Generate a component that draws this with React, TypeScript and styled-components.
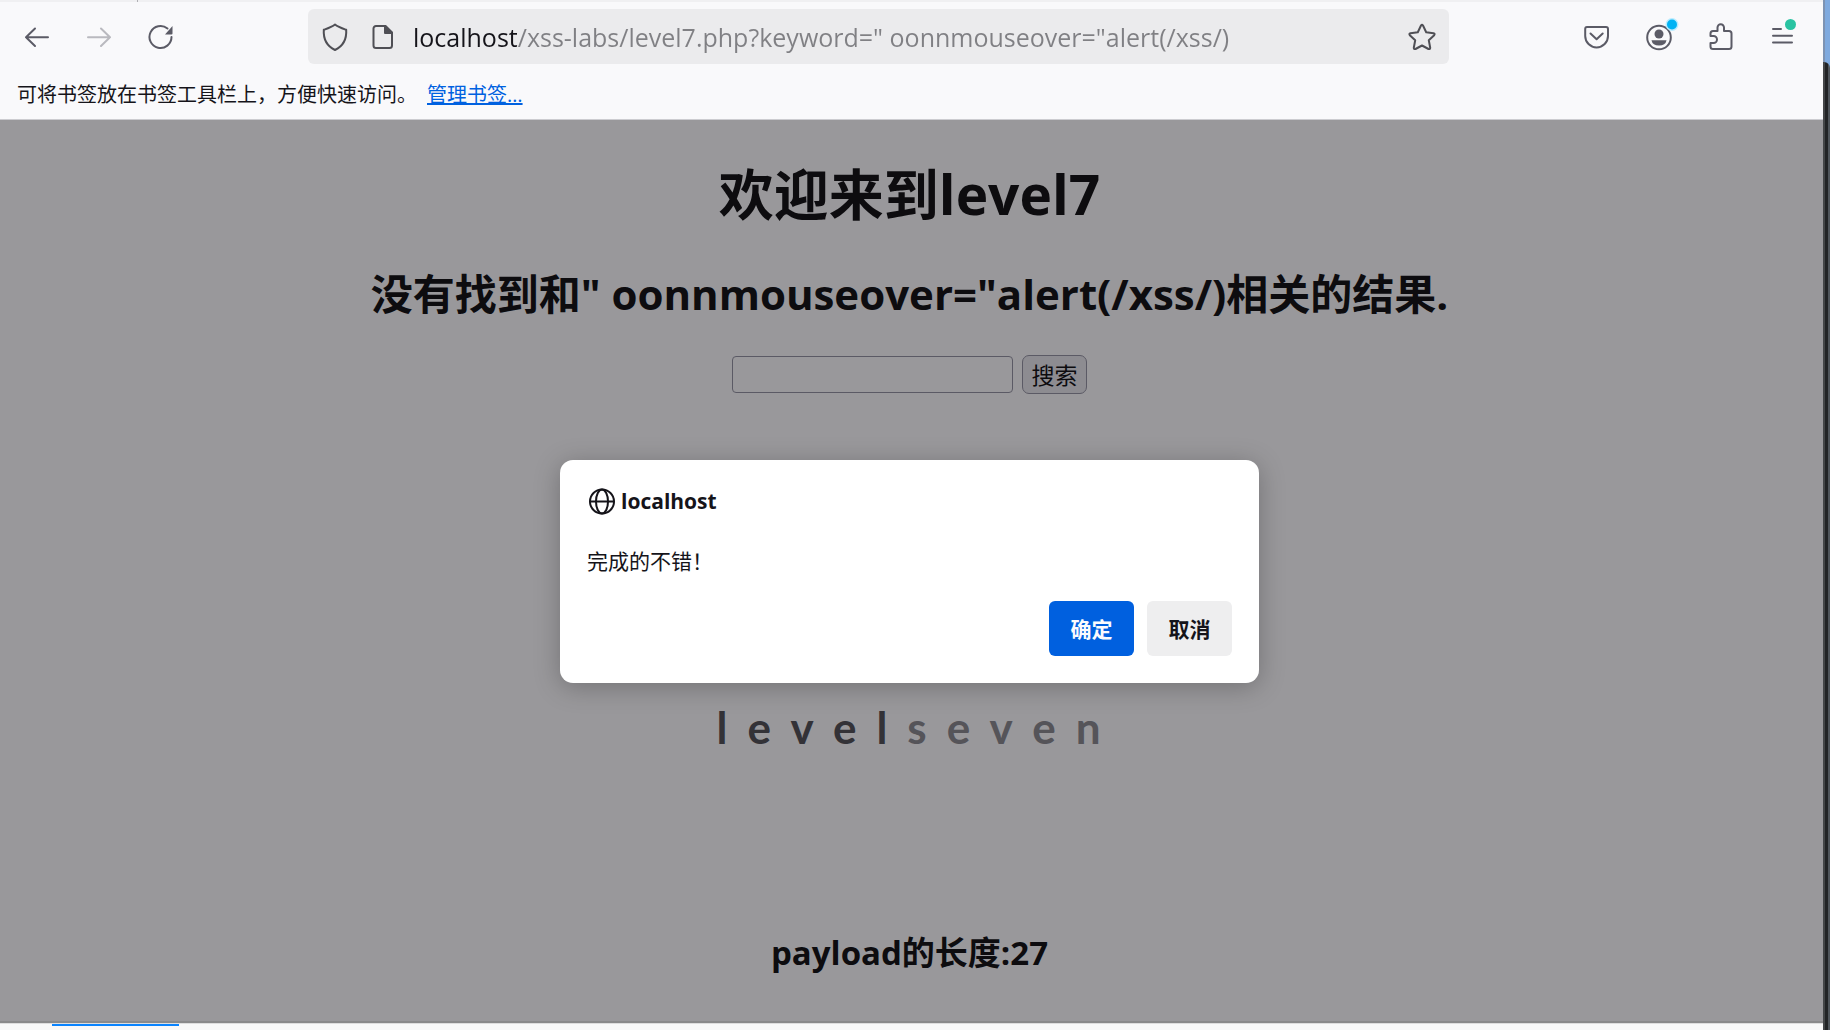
import React from "react";
import styled, { createGlobalStyle } from "styled-components";

const ui = `"Open Sans", "Noto Sans CJK SC", sans-serif`;

const GlobalStyle = createGlobalStyle`
  *, *::before, *::after { box-sizing: border-box; }
  body { margin: 0; font-family: ${ui}; color: #15141a; }
  button, input { font-family: inherit; color: inherit; }
`;

const Screen = styled.div`
  display: flex;
  min-height: 100vh;
  overflow: hidden;
`;

const BrowserWindow = styled.div`
  flex: 1;
  min-width: 0;
  display: flex;
  flex-direction: column;
`;

const Desktop = styled.div`
  width: 7px;
  display: flex;
  flex-direction: column;
  background: linear-gradient(90deg, #7d93b3 2px, #7faadf 2px);
`;

const DesktopEdge = styled.div`
  flex: 1;
  margin-top: 62px;
  border-top-right-radius: 6px;
  background: linear-gradient(90deg, #444648 2px, #222426 2px, #222426 5px, #50565c 5px);
`;

const TabStrip = styled.div`
  height: 2px;
  padding-left: 137px;
  background: #f0f0f2;
`;

const TabDivider = styled.div`
  width: 1px;
  height: 2px;
  background: #b0b0b4;
`;

const Toolbar = styled.nav`
  display: flex;
  align-items: center;
  padding: 7px 13px 6px 9px;
  background: #f9f9fb;
`;

const ToolGroup = styled.div`
  display: flex;
  gap: 6px;
`;

const IconButton = styled.button<{ $faded?: boolean }>`
  display: grid;
  place-items: center;
  width: 56px;
  height: 55px;
  padding: 0;
  border: 0;
  background: none;
  color: #5b5b66;
  opacity: ${(p) => (p.$faded ? 0.4 : 1)};
`;

const Icon = styled.svg`
  display: block;
  width: 28px;
  height: 28px;
  overflow: visible;
  fill: none;
  stroke: currentColor;
  stroke-width: 2;
  stroke-linecap: round;
  stroke-linejoin: round;
`;

const AddressBar = styled.div`
  flex: 1;
  min-width: 0;
  display: flex;
  align-items: center;
  gap: 20px;
  height: 55px;
  margin: 0 119px;
  padding: 0 13px;
  border-radius: 6px;
  background: #ebebed;
  color: #4f4f55;
`;

const AddressInput = styled.input`
  flex: 1;
  min-width: 0;
  height: 40px;
  padding: 0;
  border: 0;
  outline: 0;
  margin-left: -4px;
  font-size: 25px;
  color: transparent;
  background: linear-gradient(90deg, #15141a 104px, #808084 104px);
  background-clip: text;
  -webkit-background-clip: text;
`;

const BareButton = styled.button`
  padding: 0;
  border: 0;
  background: none;
`;

const Bookmarks = styled.div`
  display: flex;
  align-items: center;
  gap: 10px;
  height: 50px;
  padding: 1px 17px 0;
  border-bottom: 1px solid #ccccd0;
  background: #f9f9fb;
  font-size: 20px;
  line-height: 30px;
`;

const BookmarkLink = styled.a`
  color: #0061e0;
  text-decoration: underline;
`;

const Viewport = styled.div`
  position: relative;
  flex: 1;
  display: flex;
  flex-direction: column;
  border-bottom: 2px solid #8a8a8b;
`;

const Page = styled.main`
  flex: 1;
  display: flex;
  flex-direction: column;
  align-items: center;
  padding: 37px 18px 37px 14px;
  background: #fff;
  color: #000;
`;

const Heading = styled.h1`
  margin: 0;
  font-size: 55px;
  line-height: 74px;
`;

const Result = styled.h2`
  margin: 35px 0 33px;
  font-size: 42px;
  line-height: 56px;
`;

const PayloadLength = styled.h3`
  margin: 0;
  font-size: 33px;
  line-height: 42px;
`;

const SearchForm = styled.form`
  display: flex;
  align-items: center;
  gap: 9px;
`;

const SearchInput = styled.input`
  width: 281px;
  height: 37px;
  padding: 0 6px;
  border: 1px solid #8f8f9d;
  border-radius: 4px;
  background: #fff;
  font-size: 23px;
`;

const SearchButton = styled.button`
  width: 65px;
  height: 39px;
  padding: 0;
  border: 1px solid #8f8f9d;
  border-radius: 7px;
  background: #e9e9ed;
  font-size: 23px;
  line-height: 36px;
`;

const Brand = styled.figure`
  display: flex;
  flex-direction: column;
  align-items: center;
  margin: 90px 0 173px;
`;

const BrandMark = styled.svg`
  width: 200px;
  height: 201px;
`;

const BrandName = styled.figcaption`
  margin-top: 10px;
  padding-left: 18px;
  font-family: Lato, sans-serif;
  font-size: 44px;
  font-weight: 700;
  line-height: 64px;
  letter-spacing: 20px;
  color: #46464a;
`;

const BrandTail = styled.span`
  color: #838388;
`;

const Backdrop = styled.div`
  position: absolute;
  inset: 0;
  display: grid;
  place-items: center;
  padding: 2px 4px 0 0;
  background: rgba(28, 27, 34, 0.45);
`;

const Dialog = styled.section`
  width: 699px;
  padding: 27px;
  border-radius: 13px;
  background: #fff;
  box-shadow: 0 4px 26px rgba(0, 0, 0, 0.25);
`;

const DialogTitle = styled.h2`
  display: flex;
  align-items: center;
  gap: 6px;
  margin: 0;
  font-size: 21px;
  line-height: 28px;
`;

const DialogMessage = styled.p`
  margin: 31px 0 25px;
  font-size: 21px;
  line-height: 30px;
`;

const DialogActions = styled.div`
  display: flex;
  justify-content: flex-end;
  gap: 13px;
`;

const DialogButton = styled.button<{ $primary?: boolean }>`
  width: 85px;
  height: 55px;
  padding: 0 0 2px;
  border: 0;
  border-radius: 6px;
  background: ${(p) => (p.$primary ? "#0060df" : "#eeeeef")};
  color: ${(p) => (p.$primary ? "#fbfbfe" : "#15141a")};
  font-size: 21px;
  font-weight: 700;
`;

const Taskbar = styled.div`
  height: 7px;
  padding-left: 52px;
  border-top: 1px solid #dedede;
  background: #f9f9f9;
`;

const TaskIndicator = styled.div`
  width: 127px;
  height: 2px;
  background: #0a84ff;
`;

export default function App() {
  return (
    <Screen>
      <GlobalStyle />
      <BrowserWindow>
        <TabStrip>
          <TabDivider />
        </TabStrip>
        <Toolbar aria-label="导航">
          <ToolGroup>
            <IconButton aria-label="后退">
              <Icon viewBox="0 0 28 28">
                <path d="M12 5.500L3 14.200L12 23M3 14.200H25" />
              </Icon>
            </IconButton>
            <IconButton aria-label="前进" $faded>
              <Icon viewBox="0 0 28 28">
                <path d="M16 5.500L25 14.200L16 23M25 14.200H3" />
              </Icon>
            </IconButton>
            <IconButton aria-label="刷新">
              <Icon viewBox="0 0 28 28">
                <path d="M24.500 14A11 11 0 1 1 20.500 5.500" />
                <path d="M25.500 3V10.500Q25.500 11.500 24.500 11.500H18Z" fill="currentColor" stroke="none" />
              </Icon>
            </IconButton>
          </ToolGroup>
          <AddressBar>
            <Icon viewBox="0 0 28 28">
              <path d="M14 1.500C11 4 6.500 5.500 2.800 6.800C2.300 15 4.500 22.500 14 27C23.500 22.500 25.700 15 25.200 6.800C21.500 5.500 17 4 14 1.500Z" />
            </Icon>
            <Icon viewBox="0 0 28 28">
              <path d="M16.500 3H7A2.500 2.500 0 0 0 4.500 5.500V22.500A2.500 2.500 0 0 0 7 25H20.500A2.500 2.500 0 0 0 23 22.500V9.500Z" />
              <path d="M16 3V10H23Z" fill="currentColor" />
            </Icon>
            <AddressInput
              aria-label="网址"
              defaultValue={'localhost/xss-labs/level7.php?keyword=" oonnmouseover="alert(/xss/)'}
            />
            <BareButton aria-label="添加书签">
              <Icon viewBox="0 0 28 28">
                <path d="M13 2.500Q14 1 15 2.500L18.200 9.200L25.500 10.200Q27.300 10.700 26.200 12.200L20.800 17.300L22.200 24.700Q22.200 26.500 20.500 26L14 22.500L7.500 26Q5.800 26.500 5.800 24.700L7.200 17.300L1.800 12.200Q.7 10.700 2.500 10.200L9.800 9.200Z" />
              </Icon>
            </BareButton>
          </AddressBar>
          <ToolGroup>
            <IconButton aria-label="Pocket">
              <Icon viewBox="0 0 28 28">
                <path d="M5 4H24Q26 4 26 6V13A11.200 11.200 0 0 1 3.200 13V6Q3.200 4 5 4Z" />
                <path d="M8.500 10.500L14.600 16.300L20.700 10.500" />
              </Icon>
            </IconButton>
            <IconButton aria-label="账户">
              <Icon viewBox="0 0 28 28">
                <circle cx="15" cy="14.500" r="11.800" />
                <circle cx="15" cy="11" r="4.500" fill="currentColor" stroke="none" />
                <path d="M7.500 17.300H22.500Q21.500 22.500 15 22.500T7.500 17.300Z" fill="currentColor" stroke="none" />
                <circle cx="28" cy="1.500" r="6.500" fill="#b8ecff" stroke="none" />
                <circle cx="28" cy="1.500" r="5" fill="#00b3f4" stroke="none" />
              </Icon>
            </IconButton>
            <IconButton aria-label="扩展">
              <Icon viewBox="-1 0 28 28">
                <path d="M3.500 13V10.500Q3.500 8 6 8H10.500V4.500A3.200 3.200 0 0 1 17 4.500V8H22Q24.500 8 24.500 10.500V23.500Q24.500 26 22 26H6Q3.500 26 3.500 23.500V20H6.500A3.500 3.500 0 0 0 6.500 13Z" />
              </Icon>
            </IconButton>
            <IconButton aria-label="菜单">
              <Icon viewBox="0 0 28 28">
                <path d="M5 6H13M5 12.700H24M5 19.500H24" />
                <circle cx="22.500" cy="1.500" r="5.500" fill="#2ac3a2" stroke="none" />
              </Icon>
            </IconButton>
          </ToolGroup>
        </Toolbar>
        <Bookmarks>
          <span>可将书签放在书签工具栏上，方便快速访问。</span>
          <BookmarkLink href="#bookmarks">管理书签…</BookmarkLink>
        </Bookmarks>
        <Viewport>
          <Page>
            <Heading>欢迎来到level7</Heading>
            <Result>没有找到和" oonnmouseover="alert(/xss/)相关的结果.</Result>
            <SearchForm onSubmit={(e) => e.preventDefault()}>
              <SearchInput name="keyword" aria-label="keyword" />
              <SearchButton type="submit">搜索</SearchButton>
            </SearchForm>
            <Brand>
              <BrandMark viewBox="0 0 200 201" aria-hidden="true">
                <circle cx="100" cy="159" r="37" fill="none" stroke="#b8585c" strokeWidth="6" />
              </BrandMark>
              <BrandName>
                level<BrandTail>seven</BrandTail>
              </BrandName>
            </Brand>
            <PayloadLength>payload的长度:27</PayloadLength>
          </Page>
          <Backdrop>
            <Dialog role="dialog" aria-labelledby="dialog-title">
              <DialogTitle id="dialog-title">
                <Icon viewBox="0 0 28 28">
                  <circle cx="15" cy="14.500" r="12" />
                  <ellipse cx="15" cy="14.500" rx="6" ry="12" />
                  <path d="M3 14.500H27" />
                </Icon>
                localhost
              </DialogTitle>
              <DialogMessage>完成的不错！</DialogMessage>
              <DialogActions>
                <DialogButton $primary>确定</DialogButton>
                <DialogButton>取消</DialogButton>
              </DialogActions>
            </Dialog>
          </Backdrop>
        </Viewport>
        <Taskbar>
          <TaskIndicator />
        </Taskbar>
      </BrowserWindow>
      <Desktop>
        <DesktopEdge />
      </Desktop>
    </Screen>
  );
}
